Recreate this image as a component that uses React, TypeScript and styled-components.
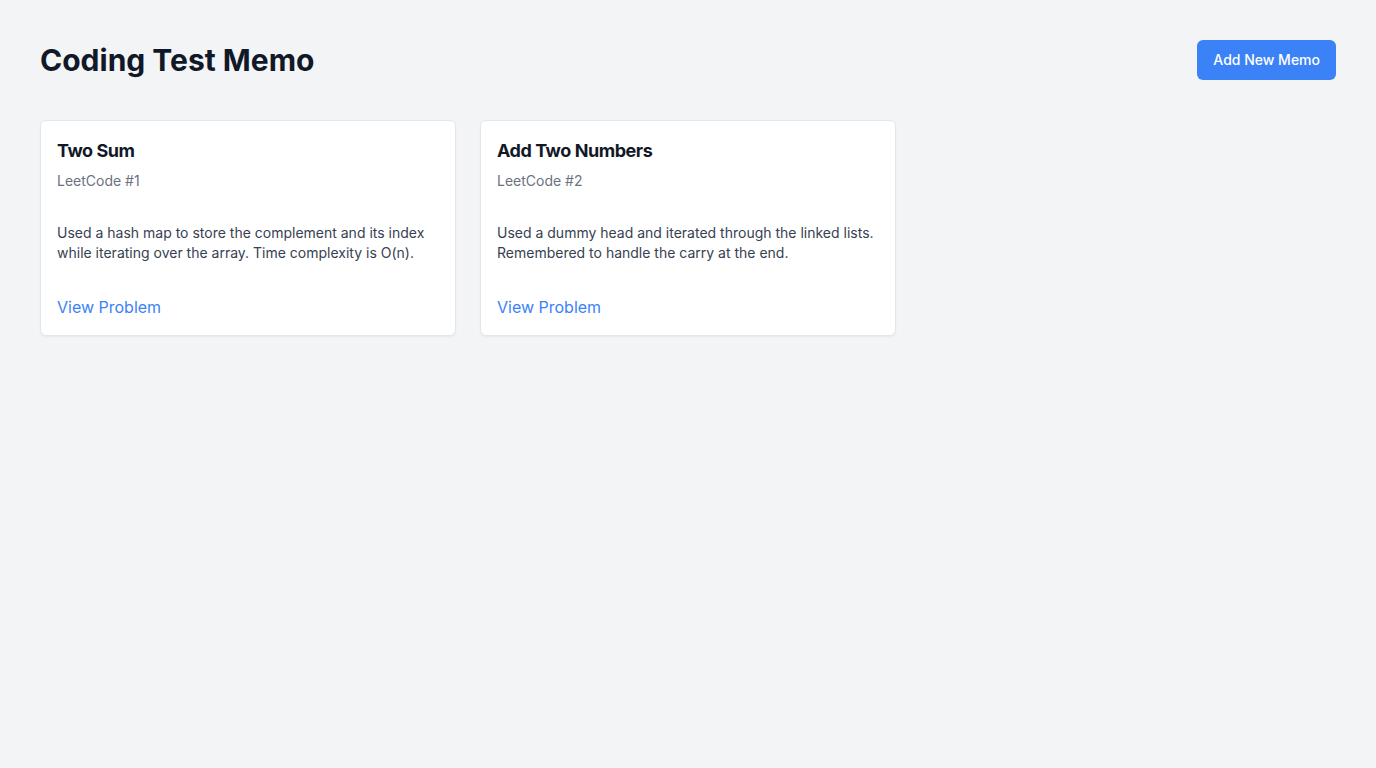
import React from "react";
import styled, { createGlobalStyle } from "styled-components";

const GlobalStyle = createGlobalStyle`
  * { box-sizing: border-box; }
  html, body { margin: 0; padding: 0; background: #f3f4f6; }
  body { font-family: Inter, "Noto Sans", "Liberation Sans", sans-serif; color: #111827; }
`;

const Page = styled.div`
  min-height: 100vh;
  padding: 40px;
  background: #f3f4f6;
`;

const Header = styled.header`
  display: flex;
  align-items: center;
  justify-content: space-between;
  margin-bottom: 40px;
`;

const Title = styled.h1`
  margin: 0;
  font-size: 30px;
  line-height: 36px;
  font-weight: 700;
  color: #111827;
`;

const AddButton = styled.button`
  height: 40px;
  padding: 0 16px 2px;
  border: none;
  border-radius: 6px;
  background: #3b82f6;
  color: #ffffff;
  font-family: inherit;
  font-size: 14px;
  font-weight: 500;
  cursor: pointer;
`;

const Grid = styled.div`
  display: grid;
  grid-template-columns: repeat(3, 1fr);
  gap: 24px;
`;

const Card = styled.article`
  display: flex;
  flex-direction: column;
  background: #ffffff;
  border: 1px solid #e5e7eb;
  border-radius: 6px;
  box-shadow: 0 1px 2px rgba(0, 0, 0, 0.05);
  padding: 16px;
`;

const CardTitle = styled.h2`
  margin: 0;
  font-size: 18px;
  line-height: 28px;
  font-weight: 700;
  letter-spacing: -0.45px;
  color: #111827;
`;

const Source = styled.p`
  margin: 6px 0 0;
  font-size: 14px;
  line-height: 20px;
  color: #6b7280;
`;

const Note = styled.p`
  margin: 32px 0 0;
  font-size: 14px;
  line-height: 20px;
  color: #374151;
`;

const Link = styled.a`
  margin-top: 32px;
  font-size: 16px;
  line-height: 24px;
  color: #3b82f6;
  text-decoration: none;
  align-self: flex-start;
`;

const memos = [
  {
    title: "Two Sum",
    source: "LeetCode #1",
    note: "Used a hash map to store the complement and its index while iterating over the array. Time complexity is O(n).",
  },
  {
    title: "Add Two Numbers",
    source: "LeetCode #2",
    note: "Used a dummy head and iterated through the linked lists. Remembered to handle the carry at the end.",
  },
];

export default function App() {
  return (
    <>
      <GlobalStyle />
      <Page>
        <Header>
          <Title>Coding Test Memo</Title>
          <AddButton>Add New Memo</AddButton>
        </Header>
        <Grid>
          {memos.map((m) => (
            <Card key={m.title}>
              <CardTitle>{m.title}</CardTitle>
              <Source>{m.source}</Source>
              <Note>{m.note}</Note>
              <Link href="#">View Problem</Link>
            </Card>
          ))}
        </Grid>
      </Page>
    </>
  );
}
